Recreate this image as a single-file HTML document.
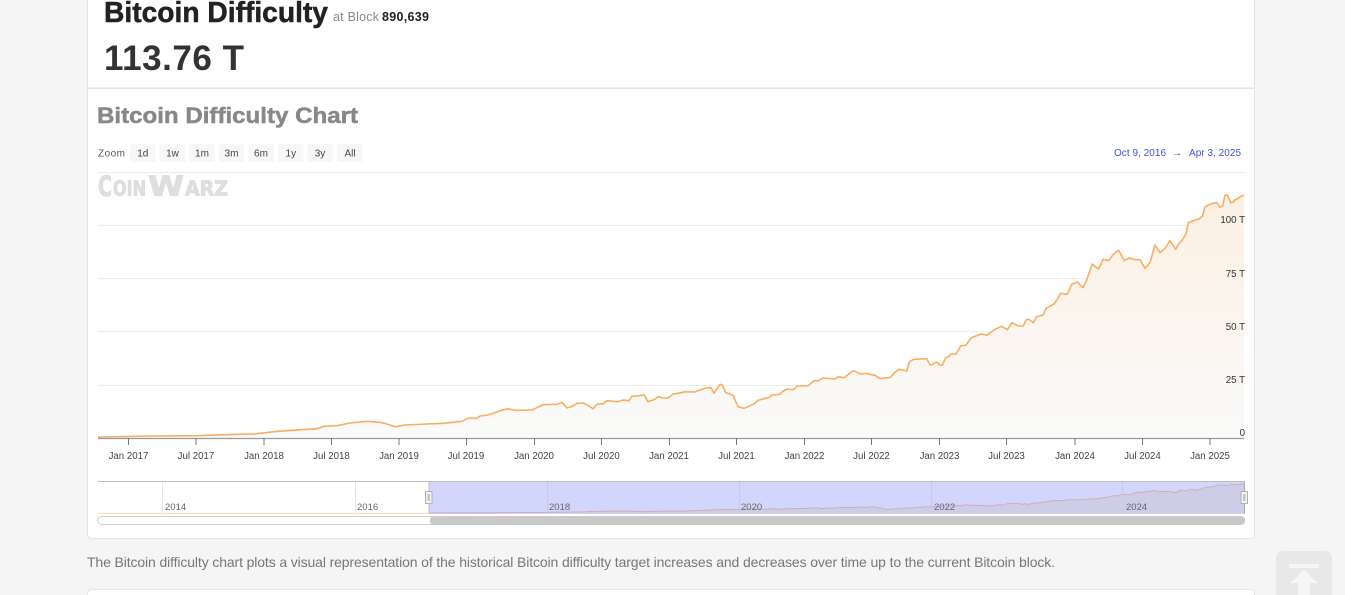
<!DOCTYPE html>
<html lang="en"><head><meta charset="utf-8"><title>Bitcoin Difficulty</title>
<style>
html,body{margin:0;padding:0;width:1345px;height:595px;overflow:hidden;background:#f5f5f5}
svg{position:absolute;left:0;top:0;display:block}
text{font-family:"Liberation Sans",Arial,sans-serif}
.x{font-size:9.7px;fill:#444;text-anchor:middle}
.y{font-size:9.7px;fill:#333;text-anchor:end}
.z{font-size:10px;fill:#444;text-anchor:middle}
.n{font-size:9.5px;fill:#666}
.g{stroke:#ececec;stroke-width:1}
.t{stroke:#777;stroke-width:1}
.nv{stroke:#e6e6e6;stroke-width:1}
.l{font-family:"DejaVu Sans",sans-serif;font-weight:bold;fill:#dedede;stroke:#dedede;stroke-width:1}
</style></head><body>
<svg width="1345" height="595" viewBox="0 0 1345 595" xmlns="http://www.w3.org/2000/svg">
<defs>
<linearGradient id="gr" gradientUnits="userSpaceOnUse" x1="0" y1="195" x2="0" y2="438">
<stop offset="0" stop-color="#fcf0e3"/><stop offset="1" stop-color="#fafafa"/>
</linearGradient>
<polyline id="ln" fill="none" stroke-linejoin="round" vector-effect="non-scaling-stroke" points="98,437 154,436 197,435.7 237,434.3 254,434 274,431.7 300,429.7 317,428.7 324,426.3 337,425.7 350,423 367,421.3 380,422.3 387,424 395,426.7 405,425 427,424 443,423.3 462,421.3 468,418.3 477,418.3 480,416 488,415 500,410.7 508,408.7 515,410.3 532,410 543,404.7 557,404.3 562,402.3 567,408 573,406 577,403.3 583,403 588,405.3 593,408.7 597,404.3 603,403.7 607,400.7 618,401.7 623,400 629,400.7 632,396.3 640,395.7 644,394.7 648,401.7 655,399.3 658,396.7 663,398 668,398 673,394 678,393.3 685,391.7 695,392 700,390 707,387.7 711,387.7 714,393.3 720,384.3 722.7,385.3 725.7,392.7 730,394 733,395.3 738,406.7 744.3,408.3 753.3,404.3 758.3,400.3 770,397 771.7,395 780,394.3 782.3,391.7 787.3,389 793.3,389.7 797.3,386 808.3,385.7 814,380.7 818.3,380.7 823.3,378 835,379 838.3,376.7 844.3,377.7 852.7,371 855,371 860,374 865.7,373.3 875,375.3 880,378.7 890.7,377.3 894,373 899,369.3 906.7,371 909.3,362 913.3,359.3 926.7,358.7 930,364.7 932.3,365 935,362.3 937.3,362.3 940,365.3 942.3,365 945.7,357.7 948.3,356.7 950.7,354 956,354 960.7,346 966,345 971.3,337.7 981.7,333.7 986.7,335.3 995,329.3 1001.7,326.3 1007.3,329.7 1012,322.7 1018.3,326 1023.3,326 1026,320 1029,319.3 1033.3,322.7 1036.7,316.7 1043.3,315 1046,308.5 1050,306 1054,304 1057.3,299.3 1060.7,293.3 1067.3,294.3 1071.7,284.3 1077.7,282 1082.7,287.7 1086,281.7 1092.3,264 1098.3,269 1103.3,259.3 1108.7,260.7 1112.7,255 1118.7,250.3 1124.3,260.7 1129.3,258 1135,259.7 1140,259.7 1145,268.3 1150,262.7 1155,245 1160,252.7 1165,248.3 1170,240.7 1175.7,249.3 1179,243.3 1181.7,240.7 1186,234 1188.3,222.7 1195,220 1199,219 1202.7,215.7 1204.7,207.3 1210,204 1216.7,202.7 1220,207.3 1222.7,206 1225,195 1227.7,195.3 1230.7,202.7 1233,202 1236,199 1238.3,198.3 1241.7,195.7 1244,195.7"/>
<polygon id="ar" points="98,437 154,436 197,435.7 237,434.3 254,434 274,431.7 300,429.7 317,428.7 324,426.3 337,425.7 350,423 367,421.3 380,422.3 387,424 395,426.7 405,425 427,424 443,423.3 462,421.3 468,418.3 477,418.3 480,416 488,415 500,410.7 508,408.7 515,410.3 532,410 543,404.7 557,404.3 562,402.3 567,408 573,406 577,403.3 583,403 588,405.3 593,408.7 597,404.3 603,403.7 607,400.7 618,401.7 623,400 629,400.7 632,396.3 640,395.7 644,394.7 648,401.7 655,399.3 658,396.7 663,398 668,398 673,394 678,393.3 685,391.7 695,392 700,390 707,387.7 711,387.7 714,393.3 720,384.3 722.7,385.3 725.7,392.7 730,394 733,395.3 738,406.7 744.3,408.3 753.3,404.3 758.3,400.3 770,397 771.7,395 780,394.3 782.3,391.7 787.3,389 793.3,389.7 797.3,386 808.3,385.7 814,380.7 818.3,380.7 823.3,378 835,379 838.3,376.7 844.3,377.7 852.7,371 855,371 860,374 865.7,373.3 875,375.3 880,378.7 890.7,377.3 894,373 899,369.3 906.7,371 909.3,362 913.3,359.3 926.7,358.7 930,364.7 932.3,365 935,362.3 937.3,362.3 940,365.3 942.3,365 945.7,357.7 948.3,356.7 950.7,354 956,354 960.7,346 966,345 971.3,337.7 981.7,333.7 986.7,335.3 995,329.3 1001.7,326.3 1007.3,329.7 1012,322.7 1018.3,326 1023.3,326 1026,320 1029,319.3 1033.3,322.7 1036.7,316.7 1043.3,315 1046,308.5 1050,306 1054,304 1057.3,299.3 1060.7,293.3 1067.3,294.3 1071.7,284.3 1077.7,282 1082.7,287.7 1086,281.7 1092.3,264 1098.3,269 1103.3,259.3 1108.7,260.7 1112.7,255 1118.7,250.3 1124.3,260.7 1129.3,258 1135,259.7 1140,259.7 1145,268.3 1150,262.7 1155,245 1160,252.7 1165,248.3 1170,240.7 1175.7,249.3 1179,243.3 1181.7,240.7 1186,234 1188.3,222.7 1195,220 1199,219 1202.7,215.7 1204.7,207.3 1210,204 1216.7,202.7 1220,207.3 1222.7,206 1225,195 1227.7,195.3 1230.7,202.7 1233,202 1236,199 1238.3,198.3 1241.7,195.7 1244,195.7 1244,438 98,438"/>
</defs>

<!-- cards -->
<rect x="87.5" y="-10" width="1167" height="98" fill="#fff" stroke="#e2e2e2"/>
<path d="M87.5 88.5H1254.5V534.5a4 4 0 0 1-4 4H91.5a4 4 0 0 1-4-4Z" fill="#fff" stroke="#e4e4e4"/>
<rect x="87.5" y="589.5" width="1167" height="20" rx="4" fill="#fff" stroke="#e6e6e6"/>

<!-- header -->
<text x="104" y="22" font-size="28.5" font-weight="bold" fill="#222" stroke="#222" stroke-width=".5" textLength="224" lengthAdjust="spacingAndGlyphs">Bitcoin Difficulty</text>
<text x="333" y="21" font-size="12.5" fill="#888" textLength="46">at Block</text>
<text x="382" y="21" font-size="12.5" font-weight="bold" fill="#222" textLength="47">890,639</text>
<text x="104" y="70" font-size="35" font-weight="bold" fill="#333" textLength="140">113.76 T</text>

<text x="97" y="123" font-size="22.5" font-weight="bold" fill="#888" stroke="#888" stroke-width=".5" textLength="261" lengthAdjust="spacingAndGlyphs">Bitcoin Difficulty Chart</text>

<!-- zoom -->
<text x="98" y="156.5" font-size="10" fill="#555" textLength="27">Zoom</text>
<g fill="#f7f7f7">
<rect x="130" y="144" width="25.5" height="18" rx="2"/><rect x="159.7" y="144" width="25.5" height="18" rx="2"/><rect x="189.3" y="144" width="25.5" height="18" rx="2"/><rect x="218.7" y="144" width="25.5" height="18" rx="2"/><rect x="248.5" y="144" width="25.5" height="18" rx="2"/><rect x="278" y="144" width="25.5" height="18" rx="2"/><rect x="307.3" y="144" width="25.5" height="18" rx="2"/><rect x="337.2" y="144" width="25.5" height="18" rx="2"/>
</g>
<text class="z" x="142.8" y="156.5">1d</text><text class="z" x="172.5" y="156.5">1w</text><text class="z" x="202" y="156.5">1m</text><text class="z" x="231.5" y="156.5">3m</text><text class="z" x="261" y="156.5">6m</text><text class="z" x="290.8" y="156.5">1y</text><text class="z" x="320" y="156.5">3y</text><text class="z" x="350" y="156.5">All</text>

<text x="1114" y="156" font-size="10" fill="#3f51d9" textLength="52">Oct 9, 2016</text>
<text x="1172" y="156" font-size="10" fill="#444">→</text>
<text x="1189" y="156" font-size="10" fill="#3f51d9" textLength="52">Apr 3, 2025</text>

<!-- grid -->
<line class="g" x1="98" x2="1244" y1="172.5" y2="172.5"/>
<line class="g" x1="98" x2="1244" y1="225.5" y2="225.5"/>
<line class="g" x1="98" x2="1244" y1="278.5" y2="278.5"/>
<line class="g" x1="98" x2="1244" y1="331.5" y2="331.5"/>
<line class="g" x1="98" x2="1244" y1="385.5" y2="385.5"/>

<!-- logo -->
<text class="l" x="98" y="195.5" font-size="28" textLength="14" lengthAdjust="spacingAndGlyphs">C</text>
<text class="l" x="113" y="195.5" font-size="20" textLength="33" lengthAdjust="spacingAndGlyphs">OIN</text>
<text class="l" x="148" y="195.5" font-size="28" textLength="36" lengthAdjust="spacingAndGlyphs">W</text>
<text class="l" x="185" y="195.5" font-size="20" textLength="43" lengthAdjust="spacingAndGlyphs">ARZ</text>

<!-- series -->
<use href="#ar" fill="url(#gr)"/>
<use href="#ln" stroke="#f8ae60" stroke-width="1.6"/>

<!-- y labels -->
<text class="y" x="1245" y="223">100 T</text>
<text class="y" x="1245" y="277">75 T</text>
<text class="y" x="1245" y="330">50 T</text>
<text class="y" x="1245" y="383">25 T</text>
<text class="y" x="1245" y="436">0</text>

<!-- axis -->
<line x1="98" x2="1244" y1="438.5" y2="438.5" stroke="#999" stroke-width="1.3"/>
<g class="t">
<line x1="128.5" x2="128.5" y1="438" y2="445"/><line x1="196" x2="196" y1="438" y2="445"/><line x1="264" x2="264" y1="438" y2="445"/><line x1="331.5" x2="331.5" y1="438" y2="445"/><line x1="399" x2="399" y1="438" y2="445"/><line x1="466.5" x2="466.5" y1="438" y2="445"/><line x1="534.5" x2="534.5" y1="438" y2="445"/><line x1="601.5" x2="601.5" y1="438" y2="445"/><line x1="669.5" x2="669.5" y1="438" y2="445"/><line x1="736.5" x2="736.5" y1="438" y2="445"/><line x1="804.5" x2="804.5" y1="438" y2="445"/><line x1="871.5" x2="871.5" y1="438" y2="445"/><line x1="939.5" x2="939.5" y1="438" y2="445"/><line x1="1006.5" x2="1006.5" y1="438" y2="445"/><line x1="1075" x2="1075" y1="438" y2="445"/><line x1="1142.5" x2="1142.5" y1="438" y2="445"/><line x1="1210" x2="1210" y1="438" y2="445"/>
</g>
<text class="x" x="128.5" y="459">Jan 2017</text><text class="x" x="196" y="459">Jul 2017</text><text class="x" x="264" y="459">Jan 2018</text><text class="x" x="331.5" y="459">Jul 2018</text><text class="x" x="399" y="459">Jan 2019</text><text class="x" x="466" y="459">Jul 2019</text><text class="x" x="534" y="459">Jan 2020</text><text class="x" x="601.5" y="459">Jul 2020</text><text class="x" x="669" y="459">Jan 2021</text><text class="x" x="736.5" y="459">Jul 2021</text><text class="x" x="804.5" y="459">Jan 2022</text><text class="x" x="871.5" y="459">Jul 2022</text><text class="x" x="939.5" y="459">Jan 2023</text><text class="x" x="1006.5" y="459">Jul 2023</text><text class="x" x="1075" y="459">Jan 2024</text><text class="x" x="1142.5" y="459">Jul 2024</text><text class="x" x="1210" y="459">Jan 2025</text>

<!-- navigator -->
<line x1="98" x2="1244" y1="481.5" y2="481.5" stroke="#bdbdbd"/>
<line x1="98" x2="429" y1="513.5" y2="513.5" stroke="#fbdcbc"/>
<rect x="429" y="482" width="815" height="32" fill="#d2d6fc"/>
<use href="#ar" transform="matrix(.7112 0 0 .1193 359.3 460.7)" fill="#cdcde8"/>
<use href="#ln" transform="matrix(.7112 0 0 .1193 359.3 460.7)" stroke="#d3adb2" stroke-width="1"/>
<line class="nv" x1="162.5" x2="162.5" y1="482" y2="514"/><line class="nv" x1="355.5" x2="355.5" y1="482" y2="514"/>
<g stroke="#c4c8ee" stroke-width="1"><line x1="547.5" x2="547.5" y1="482" y2="512"/><line x1="739.5" x2="739.5" y1="482" y2="512"/><line x1="931.5" x2="931.5" y1="482" y2="505"/><line x1="1122.5" x2="1122.5" y1="482" y2="495"/></g>
<text class="n" x="165" y="510">2014</text><text class="n" x="357" y="510">2016</text><text class="n" x="549" y="510">2018</text><text class="n" x="741" y="510">2020</text><text class="n" x="934" y="510">2022</text><text class="n" x="1126" y="510">2024</text>
<line x1="429" x2="429" y1="481" y2="514" stroke="#bbb"/><line x1="1244.5" x2="1244.5" y1="481" y2="514" stroke="#aaa"/>
<rect x="425.5" y="491.5" width="6.5" height="12" fill="#f2f2f2" stroke="#b0b0b0"/><rect x="427.5" y="494" width="2.5" height="7" fill="#c4c4c4"/>
<rect x="1241" y="491.5" width="6.5" height="12" fill="#f2f2f2" stroke="#b0b0b0"/><rect x="1243" y="494" width="2.5" height="7" fill="#c4c4c4"/>

<!-- scrollbar -->
<rect x="97.5" y="516.5" width="1147" height="8" rx="4" fill="#fff" stroke="#d0d0d0"/>
<rect x="430" y="516" width="815" height="9" rx="4" fill="#c9c9c9"/>

<!-- paragraph -->
<text x="87" y="567" font-size="14" fill="#777" textLength="968">The Bitcoin difficulty chart plots a visual representation of the historical Bitcoin difficulty target increases and decreases over time up to the current Bitcoin block.</text>

<!-- back to top -->
<rect x="1276" y="551" width="56" height="60" rx="7" fill="#e8e8e8"/>
<rect x="1289" y="564" width="30" height="4" fill="#f6f6f6"/>
<path d="M1304 570 L1318 583 L1310 583 L1310 595 L1298 595 L1298 583 L1290 583 Z" fill="#f6f6f6"/>
</svg>
</body></html>
